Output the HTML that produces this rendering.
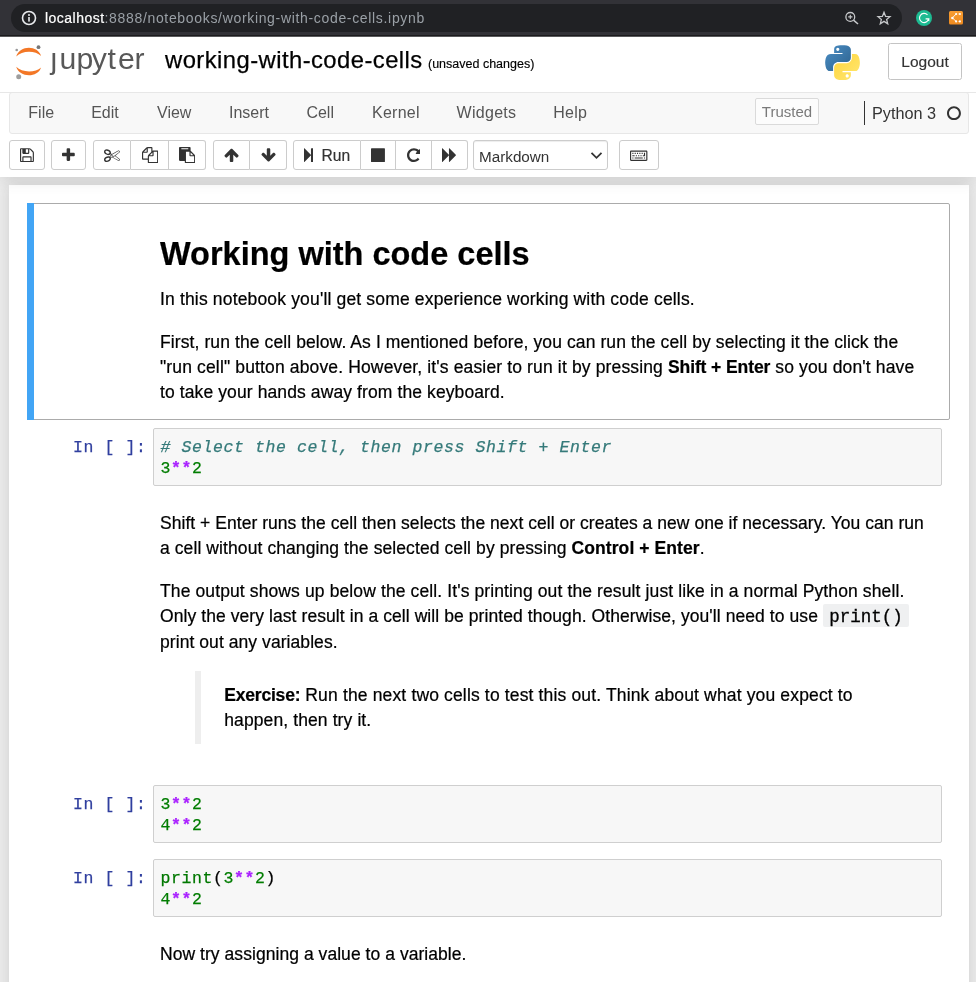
<!DOCTYPE html>
<html lang="en">
<head>
<meta charset="utf-8">
<title>working-with-code-cells - Jupyter Notebook</title>
<style>
*{box-sizing:border-box;}
html,body{margin:0;padding:0;}
body{width:976px;height:982px;overflow:hidden;background:#eee;font-family:"Liberation Sans",Arial,sans-serif;color:#000;position:relative;}
svg{display:block;}
#chrome,#header,#nb{will-change:transform;}
#header{z-index:2;}#chrome{z-index:3;}
.abs{position:absolute;}
/* ---------- browser chrome ---------- */
#chrome{position:absolute;left:0;top:0;width:976px;height:36px;background:#323237;border-bottom:1px solid #1b1b1d;box-shadow:0 1px 0 #59595b;}
#pill{position:absolute;left:11px;top:4px;width:891px;height:28px;border-radius:14px;background:#202124;}
#url{position:absolute;left:45px;top:9px;font-size:14px;line-height:18px;white-space:nowrap;color:#9aa0a6;letter-spacing:0px;}
#url{letter-spacing:0.67px;}
#url b{font-weight:normal;color:#fff;letter-spacing:0.47px;-webkit-text-stroke:0.2px #fff;}
/* ---------- header ---------- */
#header{position:absolute;left:0;top:36px;width:976px;height:141px;background:#fff;box-shadow:0 0 15px 1px rgba(87,87,87,.2);}
#jtext{position:absolute;left:49px;top:8px;font-size:31px;line-height:36px;color:#4e4e4e;white-space:nowrap;}
#title{position:absolute;left:165px;top:7.5px;font-size:23.8px;line-height:32px;white-space:nowrap;color:#000;letter-spacing:0.45px;-webkit-text-stroke:.25px #000;}
#unsaved{position:absolute;left:428px;top:19px;font-size:12.5px;-webkit-text-stroke:.15px #000;line-height:18px;white-space:nowrap;color:#000;}
#logout{position:absolute;left:888px;top:7px;width:74px;height:37px;border:1px solid #c4c4c4;border-radius:2.5px;background:#fff;color:#333;font-size:15.5px;line-height:36px;text-align:center;-webkit-text-stroke:.15px #333;}
#hbar{position:absolute;left:0;top:56px;width:976px;height:1px;background:#e7e7e7;}
#menubar{position:absolute;left:9px;top:56px;width:960px;height:42px;background:#f8f8f8;border:1px solid #e7e7e7;border-radius:3px;}
#menubar span.m{position:absolute;top:8px;font-size:16px;line-height:23px;color:#555;white-space:nowrap;}
#trusted{position:absolute;left:755px;top:62px;width:64px;height:27px;border:1px solid #dadada;background:#fcfcfc;border-radius:2px;font-size:15px;line-height:25px;text-align:center;color:#7a7a7a;}
#kdiv{position:absolute;left:864px;top:65px;width:1px;height:24px;background:#333;}
#kname{position:absolute;left:872px;top:66px;font-size:16.25px;line-height:23px;color:#333;white-space:nowrap;}
.tb{position:absolute;top:104px;height:30px;border:1px solid #ccc;background:#fff;border-radius:3px;}
.tb.l{border-radius:3px 0 0 3px;}
.tb.m{border-radius:0;border-left:none;}
.tb.r{border-radius:0 3px 3px 0;border-left:none;}
.tb svg{position:absolute;fill:#333;}
.tb span{position:absolute;font-size:16.25px;line-height:20px;color:#333;white-space:nowrap;}
/* ---------- notebook ---------- */
#nb{position:absolute;left:9px;top:185px;width:960px;height:820px;background:#fff;box-shadow:0 0 15px 1px rgba(87,87,87,.2);padding:17.5px 0 0 18px;}
.cell{position:relative;border:1px solid transparent;padding:6.5px 7px 6.5px 6.25px;display:flex;width:923px;}
.cell.code{padding-bottom:7.5px;}
.cell.sel{border-color:#ababab;border-radius:2px;}
.cell.sel:before{content:"";position:absolute;left:-1px;top:-1px;width:7px;height:calc(100% + 2px);background:#42a5f5;}
.prompt{flex:0 0 118.75px;width:118.75px;font-family:"Liberation Mono","DejaVu Sans Mono",monospace;font-size:16.5px;letter-spacing:.6px;line-height:21.25px;color:#303f9f;text-align:right;padding:8.5px 6.5px 0 0;white-space:pre;-webkit-text-stroke:0.25px currentColor;}
.inner{flex:1 1 auto;min-width:0;}
.ia{border:1px solid #cfcfcf;border-radius:2px;background:#f7f7f7;padding:7.5px 7px 6.5px 6.5px;-webkit-text-stroke:0.25px currentColor;font-family:"Liberation Mono","DejaVu Sans Mono",monospace;font-size:16.5px;letter-spacing:.6px;line-height:21px;color:#000;white-space:pre;height:58px;}
.ia .c{color:#357a7a;font-style:italic;}
.ia .n{color:#007d00;}
.ia .o{color:#a2f;font-weight:bold;}
.ia .b{color:#007800;}
.md{padding:9.75px 8.75px 7.75px 7px;font-size:17.5px;line-height:25px;color:#000;-webkit-text-stroke:0.22px #000;}
.md p{margin:0;}
.md *+p{margin-top:17.5px;}
.md h1{font-size:32.5px;line-height:32.5px;font-weight:bold;margin:18.5px 0 0 0;}
.md h1+p{margin-top:16.5px;}
.md blockquote{margin:17.5px 35px;padding:11.25px 22.5px 11.25px 23.25px;border-left:6px solid #eee;}
.md code{font-family:"Liberation Mono","DejaVu Sans Mono",monospace;font-size:17.5px;display:inline-block;line-height:19.1px;background:#eff0f1;padding:3.5px 6.25px 0;border-radius:2px;letter-spacing:0;-webkit-text-stroke:0.3px #000;}
#L3 strong{letter-spacing:-0.1px;}#L10 strong{letter-spacing:-0.2px;}
#L1{letter-spacing:0.163px;}
#L2{letter-spacing:0.097px;}
#L3{letter-spacing:0.143px;}
#L4{letter-spacing:0.104px;}
#L5{letter-spacing:0.039px;}
#L6{letter-spacing:0.090px;}
#L7{letter-spacing:0.115px;}
#L8{letter-spacing:0.076px;}
#L9{letter-spacing:0.065px;}
#L10{letter-spacing:0.152px;}
#L11{letter-spacing:0.105px;}
#L12{letter-spacing:0.051px;}
#L9{position:relative;top:1px;}
</style>
</head>
<body>
<div id="chrome">
  <div id="pill"></div>
  <svg class="abs" style="left:21px;top:10px" width="16" height="16" viewBox="0 0 16 16"><circle cx="8" cy="8" r="6.5" fill="none" stroke="#e8eaed" stroke-width="1.6"/><rect x="7.2" y="7" width="1.6" height="4.6" fill="#e8eaed"/><circle cx="8" cy="4.9" r="1" fill="#e8eaed"/></svg>
  <div id="url"><b>localhost</b>:8888/notebooks/working-with-code-cells.ipynb</div>
  <svg class="abs" style="left:842px;top:9px" width="18" height="18" viewBox="0 0 18 18"><circle cx="8.3" cy="7.9" r="4.4" fill="none" stroke="#c6c8ca" stroke-width="1.3"/><path d="M11.5 11.1 L16 15" stroke="#c6c8ca" stroke-width="1.5" fill="none"/><path d="M6.2 7.9h4.2M8.3 5.8v4.2" stroke="#c6c8ca" stroke-width="1.1" fill="none"/></svg>
  <svg class="abs" style="left:876px;top:10px" width="16" height="16" viewBox="0 0 16 16"><path d="M8.00 2.30 L9.62 6.38 L13.99 6.65 L10.62 9.45 L11.70 13.70 L8.00 11.35 L4.30 13.70 L5.38 9.45 L2.01 6.65 L6.38 6.38 Z" fill="none" stroke="#c6c8ca" stroke-width="1.3" stroke-linejoin="miter"/></svg>
  <svg class="abs" style="left:916px;top:10px" width="16" height="16" viewBox="0 0 16 16"><circle cx="8" cy="8" r="8" fill="#1dbb92"/><path d="M11.5 4.9 A4.6 4.6 0 1 0 12.6 8.9 H9.6" fill="none" stroke="#fff" stroke-width="1.1"/><path d="M11.2 10.6 L13.4 8.2 L13.3 11.2 Z" fill="#fff"/></svg>
  <svg class="abs" style="left:949px;top:11px" width="14" height="13.5" viewBox="0 0 14 13.5"><defs><linearGradient id="og" x1="0" y1="0" x2="0" y2="1"><stop offset="0" stop-color="#f79d33"/><stop offset="1" stop-color="#ee8a1f"/></linearGradient></defs><rect width="14" height="13.5" rx="1.5" fill="url(#og)"/><path d="M3.4 6.9 L7.1 3 M3.4 6.9 L7.1 10.4" stroke="#fff" stroke-width=".9" fill="none"/><path d="M7.1 3 H10.9 M7.1 10.4 H10.9" stroke="#fff" stroke-opacity=".55" stroke-width=".8" stroke-dasharray="1 .8" fill="none"/><g fill="#fff"><circle cx="3.4" cy="6.9" r="1.25"/><circle cx="7.1" cy="3" r="1.05"/><circle cx="10.9" cy="3" r="1.05"/><circle cx="7.1" cy="10.4" r="1.05"/><circle cx="10.9" cy="10.4" r="1.05"/></g></svg>
</div>
<div id="header">
  <svg class="abs" style="left:12px;top:8px" width="34" height="36" viewBox="12 44 34 36">
<path d="M16.2 56.6 C19.5 44.9 37.8 44.9 41.1 56 C35.5 50.2 21.8 50.2 16.2 56.6 Z" fill="#f37726"/>
<path d="M16.2 66.8 C19.5 77.9 37.8 77.9 41.1 67.4 C35.5 72.8 21.8 72.8 16.2 66.8 Z" fill="#f37726"/>
<circle cx="38.5" cy="47.2" r="1.9" fill="#767677"/>
<circle cx="16.7" cy="50" r="1.3" fill="#989798"/>
<circle cx="18.7" cy="76.8" r="2.5" fill="#9e9e9e"/>
</svg>
  <svg class="abs" style="left:44px;top:4px" width="110" height="45" viewBox="44 40 110 45"><text x="50.6" y="68.6" dx="0 2.2 0.3 -1.7 0.8 2.1 -0.5" font-family="Liberation Sans, Arial, sans-serif" font-size="30.2" fill="#585858">jupyter</text><rect x="50" y="43" width="8" height="9.2" fill="#fff"/></svg>
  <div id="title">working-with-code-cells</div>
  <div id="unsaved">(unsaved changes)</div>
  <svg class="abs" style="left:825px;top:8.5px" width="35" height="35" viewBox="-0.5 -0.5 112 112">
<defs><linearGradient id="pb" x1="0" y1="0" x2="1" y2="1"><stop offset="0" stop-color="#4b8fc6"/><stop offset="1" stop-color="#2d618d"/></linearGradient>
<linearGradient id="pyl" x1="0" y1="0" x2="1" y2="1"><stop offset="0" stop-color="#ffd43b"/><stop offset="1" stop-color="#ffe873"/></linearGradient></defs>
<path fill="url(#pb)" d="M 54.918785,9.1927421e-4 C 50.335132,0.02221727 45.957846,0.41313697 42.106285,1.0946693 30.760069,3.0991731 28.700036,7.2947714 28.700035,15.032169 v 10.21875 h 26.8125 v 3.40625 h -26.8125 -10.0625 c -7.792459,0 -14.6157588,4.683717 -16.7499998,13.59375 -2.46181998,10.212966 -2.57101508,16.586023 0,27.25 1.9059283,7.937852 6.4575432,13.593748 14.2499998,13.59375 h 9.21875 v -12.25 c 0,-8.849902 7.657144,-16.656248 16.75,-16.65625 h 26.78125 c 7.454951,0 13.406253,-6.138164 13.40625,-13.625 v -25.53125 c 0,-7.2663386 -6.12998,-12.7247771 -13.40625,-13.9374997 C 64.281548,0.32794397 59.502438,-0.02037903 54.918785,9.1927421e-4 Z m -14.5,8.21875012579 c 2.769547,0 5.03125,2.2986456 5.03125,5.1249996 -2e-6,2.816336 -2.261703,5.09375 -5.03125,5.09375 -2.779476,-1e-6 -5.03125,-2.277415 -5.03125,-5.09375 -10e-7,-2.826353 2.251774,-5.1249996 5.03125,-5.1249996 z"/><path fill="url(#pyl)" d="m 85.637535,28.657169 v 11.90625 c 0,9.230755 -7.825895,16.999999 -16.75,17 h -26.78125 c -7.335833,0 -13.406249,6.278483 -13.40625,13.625 v 25.531247 c 0,7.266344 6.318588,11.540324 13.40625,13.625004 8.487331,2.49561 16.626237,2.94663 26.78125,0 6.750155,-1.95439 13.406253,-5.88761 13.40625,-13.625004 V 86.500919 h -26.78125 v -3.40625 h 26.78125 13.406254 c 7.792461,0 10.696251,-5.435408 13.406241,-13.59375 2.79933,-8.398886 2.68022,-16.475776 0,-27.25 -1.92578,-7.757441 -5.60387,-13.59375 -13.406241,-13.59375 z m -15.0625,64.65625 c 2.779478,3e-6 5.03125,2.277417 5.03125,5.093747 -2e-6,2.826354 -2.251775,5.125004 -5.03125,5.125004 -2.76955,0 -5.03125,-2.29865 -5.03125,-5.125004 2e-6,-2.81633 2.261697,-5.093747 5.03125,-5.093747 z"/></svg>
  <div id="logout">Logout</div>
  <div id="hbar"></div>
  <div id="menubar">
    <span class="m" style="left:18.3px">File</span>
    <span class="m" style="left:81.2px">Edit</span>
    <span class="m" style="left:147px">View</span>
    <span class="m" style="left:219px">Insert</span>
    <span class="m" style="left:296.4px">Cell</span>
    <span class="m" style="left:362px;letter-spacing:.25px">Kernel</span>
    <span class="m" style="left:446.5px;letter-spacing:.3px">Widgets</span>
    <span class="m" style="left:543.2px;letter-spacing:.3px">Help</span>
  </div>
  <div id="trusted">Trusted</div>
  <div id="kdiv"></div>
  <div id="kname">Python 3</div>
  <svg class="abs" style="left:946.80px;top:69.10px;fill:#333;" width="13.93" height="16.25" viewBox="0 -1536 1536 1792"><path transform="scale(1,-1)" d="M768 1184C1068 1184 1312 940 1312 640C1312 340 1068 96 768 96C468 96 224 340 224 640C224 940 468 1184 768 1184ZM1536 640C1536 1064 1192 1408 768 1408C344 1408 0 1064 0 640C0 216 344 -128 768 -128C1192 -128 1536 216 1536 640Z"/></svg>
  <div class="tb " style="left:9px;width:36px"><svg class="abs" style="left:10.04px;top:5.90px;" width="13.93" height="16.25" viewBox="0 -1536 1536 1792"><path transform="scale(1,-1)" d="M384 0V384H1152V0ZM1280 0V416C1280 469 1237 512 1184 512H352C299 512 256 469 256 416V0H128V1280H256V864C256 811 299 768 352 768H928C981 768 1024 811 1024 864V1280C1044 1280 1083 1264 1097 1250L1378 969C1391 956 1408 915 1408 896V0ZM896 928C896 911 881 896 864 896H672C655 896 640 911 640 928V1248C640 1265 655 1280 672 1280H864C881 1280 896 1265 896 1248V928ZM1536 896C1536 949 1506 1022 1468 1060L1188 1340C1150 1378 1077 1408 1024 1408H96C43 1408 0 1365 0 1312V-32C0 -85 43 -128 96 -128H1440C1493 -128 1536 -85 1536 -32Z"/></svg></div>
<div class="tb " style="left:51px;width:35px"><svg class="abs" style="left:10.12px;top:5.90px;" width="12.77" height="16.25" viewBox="0 -1536 1408 1792"><path transform="scale(1,-1)" d="M1408 800C1408 853 1365 896 1312 896H896V1312C896 1365 853 1408 800 1408H608C555 1408 512 1365 512 1312V896H96C43 896 0 853 0 800V608C0 555 43 512 96 512H512V96C512 43 555 0 608 0H800C853 0 896 43 896 96V512H1312C1365 512 1408 555 1408 608Z"/></svg></div>
<div class="tb l" style="left:93px;width:37.5px"><svg class="abs" style="left:9.62px;top:5.90px;" width="16.25" height="16.25" viewBox="0 -1536 1792 1792"><path transform="scale(1,-1)" d="M960 640C925 640 896 611 896 576C896 541 925 512 960 512C995 512 1024 541 1024 576C1024 611 995 640 960 640ZM1260 576 1767 974C1785 987 1794 1009 1792 1030C1789 1052 1776 1071 1757 1081L1629 1145C1620 1150 1610 1152 1600 1152C1589 1152 1578 1149 1569 1144L879 757L769 823C765 825 761 827 757 828C766 859 770 892 767 925C758 1028 689 1127 579 1196C494 1250 396 1280 302 1280C212 1280 136 1253 80 1201C23 1149 -6 1073 1 995C10 893 79 794 188 724C273 670 372 640 466 640C522 640 573 651 617 671C623 662 630 655 639 649L761 576L639 503C630 497 623 490 617 481C573 501 522 512 466 512C372 512 273 482 188 428C79 358 10 259 1 157C-6 79 23 3 80 -50C136 -101 212 -128 302 -128C396 -128 494 -98 579 -44C689 26 758 124 767 227C770 260 766 293 757 324C761 325 765 327 769 329L879 395L1569 8C1578 3 1589 0 1600 0C1610 0 1620 2 1629 7L1757 71C1776 81 1789 100 1792 122C1794 143 1785 165 1767 178ZM579 836C553 812 512 800 466 800C405 800 335 820 274 859C166 927 128 1028 189 1084C215 1108 256 1120 302 1120C362 1120 433 1100 494 1061C602 993 640 892 579 836ZM494 91C433 52 362 32 302 32C256 32 215 44 189 68C128 124 166 225 274 293C335 332 405 352 466 352C512 352 553 340 579 316C640 260 602 159 494 91ZM672 704 681 713C683 715 685 716 688 719C696 726 702 734 710 742L736 768L815 721L801 713C781 701 768 680 768 657V646ZM896 480 736 384 710 410C702 418 696 426 688 434C685 436 683 437 681 440L672 448L832 544V657L1600 1088L1728 1024L992 448ZM1600 64 1018 391C1023 393 1028 394 1031 398L1208 536L1728 128Z"/></svg></div>
<div class="tb m" style="left:130.5px;width:38.5px"><svg class="abs" style="left:11.12px;top:5.90px;" width="16.25" height="16.25" viewBox="0 -1536 1792 1792"><path transform="scale(1,-1)" d="M1696 1152H1280C1241 1152 1191 1135 1152 1112V1440C1152 1493 1109 1536 1056 1536H640C587 1536 513 1505 476 1468L68 1060C31 1023 0 949 0 896V224C0 171 43 128 96 128H640V-160C640 -213 683 -256 736 -256H1696C1749 -256 1792 -213 1792 -160V1056C1792 1109 1749 1152 1696 1152ZM1152 939V640H853ZM512 1323V1024H213ZM708 676C671 639 640 565 640 512V256H128V896H544C597 896 640 939 640 992V1408H1024V992ZM1664 -128H768V512H1184C1237 512 1280 555 1280 608V1024H1664Z"/></svg></div>
<div class="tb r" style="left:169px;width:36.5px"><svg class="abs" style="left:10.12px;top:5.90px;" width="16.25" height="16.25" viewBox="0 -1536 1792 1792"><path transform="scale(1,-1)" d="M768 -128V1024H1152V608C1152 555 1195 512 1248 512H1664V-128ZM1024 1312C1024 1295 1009 1280 992 1280H288C271 1280 256 1295 256 1312V1376C256 1393 271 1408 288 1408H992C1009 1408 1024 1393 1024 1376V1312ZM1280 640V939L1579 640ZM1792 512C1792 565 1762 638 1724 676L1316 1084C1305 1095 1293 1104 1280 1112V1440C1280 1493 1237 1536 1184 1536H96C43 1536 0 1493 0 1440V96C0 43 43 0 96 0H640V-160C640 -213 683 -256 736 -256H1696C1749 -256 1792 -213 1792 -160Z"/></svg></div>
<div class="tb l" style="left:213px;width:37px"><svg class="abs" style="left:9.96px;top:5.90px;" width="15.09" height="16.25" viewBox="0 -1536 1664 1792"><path transform="scale(1,-1)" d="M1611 565C1611 599 1597 632 1574 656L923 1307C899 1331 866 1344 832 1344C798 1344 765 1331 742 1307L91 656C67 632 53 599 53 565C53 531 67 499 91 475L166 400C189 376 222 362 256 362C290 362 323 376 346 400L640 693V-11C640 -83 700 -128 768 -128H896C964 -128 1024 -83 1024 -11V693L1318 400C1341 376 1374 362 1408 362C1442 362 1475 376 1499 400L1574 475C1597 499 1611 531 1611 565Z"/></svg></div>
<div class="tb r" style="left:250px;width:36.5px"><svg class="abs" style="left:10.71px;top:5.90px;" width="15.09" height="16.25" viewBox="0 -1536 1664 1792"><path transform="scale(1,-1)" d="M1611 704C1611 738 1597 771 1574 795L1499 870C1475 893 1442 907 1408 907C1374 907 1341 893 1318 870L1024 576V1280C1024 1350 966 1408 896 1408H768C698 1408 640 1350 640 1280V576L346 870C323 893 290 907 256 907C222 907 189 893 165 870L91 795C67 771 53 738 53 704C53 670 67 637 91 614L742 -38C765 -61 798 -75 832 -75C866 -75 899 -61 923 -38L1574 614C1597 637 1611 670 1611 704Z"/></svg></div>
<div class="tb l" style="left:293px;width:67.5px"><svg class="abs" style="left:10.00px;top:5.90px;" width="9.29" height="16.25" viewBox="0 -1536 1024 1792"><path transform="scale(1,-1)" d="M45 -115 755 595C761 601 765 607 768 614V-64C768 -99 797 -128 832 -128H960C995 -128 1024 -99 1024 -64V1344C1024 1379 995 1408 960 1408H832C797 1408 768 1379 768 1344V666C765 673 761 679 755 685L45 1395C20 1420 0 1411 0 1376V-96C0 -131 20 -140 45 -115Z"/></svg><span style="left:27.6px;top:5px;font-size:15.6px;-webkit-text-stroke:.2px #333">Run</span></div>
<div class="tb m" style="left:360.5px;width:35.0px"><svg class="abs" style="left:10.54px;top:5.90px;" width="13.93" height="16.25" viewBox="0 -1536 1536 1792"><path transform="scale(1,-1)" d="M1536 1344C1536 1379 1507 1408 1472 1408H64C29 1408 0 1379 0 1344V-64C0 -99 29 -128 64 -128H1472C1507 -128 1536 -99 1536 -64Z"/></svg></div>
<div class="tb m" style="left:395.5px;width:36.0px"><svg class="abs" style="left:11.04px;top:5.90px;" width="13.93" height="16.25" viewBox="0 -1536 1536 1792"><path transform="scale(1,-1)" d="M1536 1280C1536 1306 1520 1329 1497 1339C1473 1349 1445 1344 1427 1325L1297 1196C1156 1329 965 1408 768 1408C345 1408 0 1063 0 640C0 217 345 -128 768 -128C997 -128 1213 -27 1359 149C1369 162 1369 181 1357 192L1220 330C1213 336 1204 339 1195 339C1186 338 1177 334 1172 327C1074 200 927 128 768 128C486 128 256 358 256 640C256 922 486 1152 768 1152C899 1152 1023 1102 1117 1015L979 877C960 859 955 831 965 808C975 784 998 768 1024 768H1472C1507 768 1536 797 1536 832Z"/></svg></div>
<div class="tb r" style="left:431.5px;width:36.0px"><svg class="abs" style="left:10.46px;top:5.90px;" width="15.09" height="16.25" viewBox="0 -1536 1664 1792"><path transform="scale(1,-1)" d="M45 -115 755 595C761 601 765 607 768 614V-96C768 -131 788 -140 813 -115L1523 595C1548 620 1548 660 1523 685L813 1395C788 1420 768 1411 768 1376V666C765 673 761 679 755 685L45 1395C20 1420 0 1411 0 1376V-96C0 -131 20 -140 45 -115Z"/></svg></div>
<div class="tb" style="left:473px;width:135px;border-color:#ccc;box-shadow:inset 0 1px 1px rgba(0,0,0,.075)"><span style="left:5px;top:5.6px;font-size:15.25px">Markdown</span><svg style="left:116px;top:10px" width="13" height="9" viewBox="0 0 13 9"><path d="M1.5 1.8 L6.5 6.8 L11.5 1.8" fill="none" stroke="#333" stroke-width="1.8"/></svg></div>
<div class="tb " style="left:619px;width:40px"><svg class="abs" style="left:10.29px;top:5.90px;" width="17.41" height="16.25" viewBox="0 -1536 1920 1792"><path transform="scale(1,-1)" d="M384 368C384 377 377 384 368 384H272C263 384 256 377 256 368V272C256 263 263 256 272 256H368C377 256 384 263 384 272ZM512 624C512 633 505 640 496 640H272C263 640 256 633 256 624V528C256 519 263 512 272 512H496C505 512 512 519 512 528ZM384 880C384 889 377 896 368 896H272C263 896 256 889 256 880V784C256 775 263 768 272 768H368C377 768 384 775 384 784ZM1408 368C1408 377 1401 384 1392 384H528C519 384 512 377 512 368V272C512 263 519 256 528 256H1392C1401 256 1408 263 1408 272ZM768 624C768 633 761 640 752 640H656C647 640 640 633 640 624V528C640 519 647 512 656 512H752C761 512 768 519 768 528ZM640 880C640 889 633 896 624 896H528C519 896 512 889 512 880V784C512 775 519 768 528 768H624C633 768 640 775 640 784ZM1024 624C1024 633 1017 640 1008 640H912C903 640 896 633 896 624V528C896 519 903 512 912 512H1008C1017 512 1024 519 1024 528ZM896 880C896 889 889 896 880 896H784C775 896 768 889 768 880V784C768 775 775 768 784 768H880C889 768 896 775 896 784ZM1280 624C1280 633 1273 640 1264 640H1168C1159 640 1152 633 1152 624V528C1152 519 1159 512 1168 512H1264C1273 512 1280 519 1280 528ZM1664 368C1664 377 1657 384 1648 384H1552C1543 384 1536 377 1536 368V272C1536 263 1543 256 1552 256H1648C1657 256 1664 263 1664 272ZM1152 880C1152 889 1145 896 1136 896H1040C1031 896 1024 889 1024 880V784C1024 775 1031 768 1040 768H1136C1145 768 1152 775 1152 784ZM1408 880C1408 889 1401 896 1392 896H1296C1287 896 1280 889 1280 880V784C1280 775 1287 768 1296 768H1392C1401 768 1408 775 1408 784ZM1664 880C1664 889 1657 896 1648 896H1552C1543 896 1536 889 1536 880V640H1424C1415 640 1408 633 1408 624V528C1408 519 1415 512 1424 512H1648C1657 512 1664 519 1664 528ZM1792 128H128V1024H1792ZM1920 1024C1920 1095 1863 1152 1792 1152H128C57 1152 0 1095 0 1024V128C0 57 57 0 128 0H1792C1863 0 1920 57 1920 128Z"/></svg></div>
</div>
<div id="nb">
  <div class="cell sel">
    <div class="prompt"></div>
    <div class="inner"><div class="md">
      <h1><span id="H1">Working with code cells</span></h1>
      <p><span id="L1">In this notebook you'll get some experience working with code cells.</span></p>
      <p><span id="L2">First, run the cell below. As I mentioned before, you can run the cell by selecting it the click the</span><br><span id="L3">"run cell" button above. However, it's easier to run it by pressing <strong>Shift + Enter</strong> so you don't have</span><br><span id="L4">to take your hands away from the keyboard.</span></p>
    </div></div>
  </div>
  <div class="cell code" style="padding-top:7px;padding-bottom:7px">
    <div class="prompt">In [ ]:</div>
    <div class="inner"><div class="ia"><span class="c"># Select the cell, then press Shift + Enter</span>
<span class="n">3</span><span class="o">**</span><span class="n">2</span></div></div>
  </div>
  <div class="cell">
    <div class="prompt"></div>
    <div class="inner"><div class="md" style="padding-bottom:9px">
      <p><span id="L5">Shift + Enter runs the cell then selects the next cell or creates a new one if necessary. You can run</span><br><span id="L6">a cell without changing the selected cell by pressing <strong>Control + Enter</strong>.</span></p>
      <p><span id="L7">The output shows up below the cell. It's printing out the result just like in a normal Python shell.</span><br><span id="L8">Only the very last result in a cell will be printed though. Otherwise, you'll need to use <code>print()</code></span><br><span id="L9">print out any variables.</span></p>
      <blockquote><p><span id="L10"><strong>Exercise:</strong> Run the next two cells to test this out. Think about what you expect to</span><br><span id="L11">happen, then try it.</span></p></blockquote>
    </div></div>
  </div>
  <div class="cell code">
    <div class="prompt">In [ ]:</div>
    <div class="inner"><div class="ia"><span class="n">3</span><span class="o">**</span><span class="n">2</span>
<span class="n">4</span><span class="o">**</span><span class="n">2</span></div></div>
  </div>
  <div class="cell code">
    <div class="prompt">In [ ]:</div>
    <div class="inner"><div class="ia"><span class="b">print</span>(<span class="n">3</span><span class="o">**</span><span class="n">2</span>)
<span class="n">4</span><span class="o">**</span><span class="n">2</span></div></div>
  </div>
  <div class="cell">
    <div class="prompt"></div>
    <div class="inner"><div class="md" style="padding-top:8.25px">
      <p><span id="L12">Now try assigning a value to a variable.</span></p>
    </div></div>
  </div>
</div>
</body>
</html>
